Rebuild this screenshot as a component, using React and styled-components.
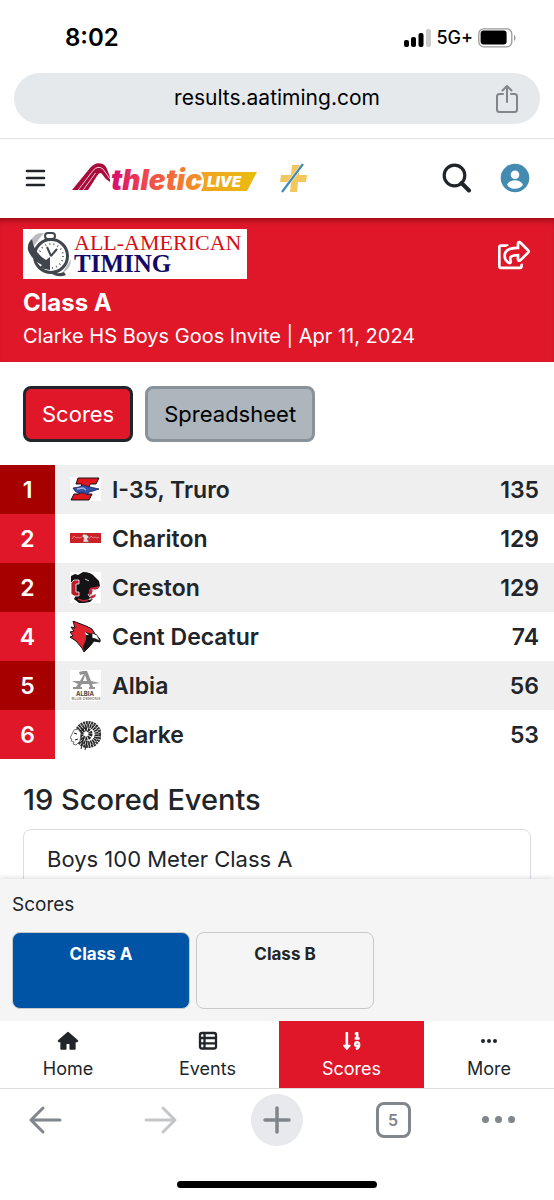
import React from "react";
import styled, { createGlobalStyle } from "styled-components";
import { FaRegShareSquare, FaSortNumericDown } from "react-icons/fa";

const GlobalStyle = createGlobalStyle`
	* {
		box-sizing: border-box;
	}
	body {
		margin: 0;
		background-color: #fff;
		color: #212529;
		font-family: Inter, "Liberation Sans", sans-serif;
	}
	button, input {
		font-family: inherit;
	}
	svg {
		display: block;
	}
`;

const Phone = styled.div`
	display: flex;
	flex-direction: column;
	height: 100vh;
	overflow: hidden;
`;

const StatusBar = styled.div`
	flex: none;
	display: flex;
	justify-content: space-between;
	align-items: center;
	height: 73px;
	padding: 2px 38px 0 65px;
	color: #000;
`;

const Clock = styled.time`
	font-size: 24px;
	font-weight: 600;
`;

const Signal = styled.div`
	display: flex;
	align-items: center;
	gap: 5px;
	font-size: 18px;
	font-weight: 500;
`;

const Omnibox = styled.form`
	flex: none;
	display: grid;
	grid-template-columns: 66px 1fr 66px;
	align-items: center;
	height: 51px;
	margin: 0 14px 14px;
	border-radius: 26px;
	background-color: #e6e9ec;
	> input {
		grid-column: 2;
		width: 100%;
		padding: 0 0 3px;
		border: 0;
		background: none;
		color: #000;
		font-size: 21px;
		text-align: center;
	}
`;

const IconButton = styled.button`
	display: flex;
	justify-content: center;
	align-items: center;
	padding: 0;
	border: 0;
	background: none;
	color: ${(props) => props.$color || "#212529"};
	cursor: pointer;
`;

const Header = styled.header`
	flex: none;
	display: flex;
	align-items: center;
	height: 80px;
	padding: 0 24px 2px;
	border-top: 1px solid #dfe1e5;
	background-color: #fff;
`;

const Brand = styled.a`
	display: flex;
	align-items: center;
	gap: 20px;
	margin: 0 auto 0 24px;
`;

const HeaderActions = styled.div`
	display: flex;
	align-items: center;
	gap: 28px;
`;

const Content = styled.main`
	flex: 1;
	min-height: 0;
	overflow: hidden;
`;

const Hero = styled.section`
	display: flex;
	justify-content: space-between;
	align-items: flex-start;
	height: 144px;
	padding: 11px 24px 0 23px;
	background-color: #e01729;
	box-shadow: inset 0 6px 6px -4px rgba(90, 0, 0, 0.6);
	color: #fff;
	h1 {
		margin: 9px 0 4px;
		font-size: 24px;
		line-height: 30px;
		font-weight: 700;
	}
	p {
		margin: 0;
		font-size: 20px;
		line-height: 28px;
	}
`;

const ShareButton = styled(IconButton)`
	margin-top: 10px;
`;

const Tabs = styled.div`
	display: flex;
	gap: 12px;
	padding: 24px 23px 23px;
`;

const Tab = styled.button`
	height: 56px;
	padding: 0 16px;
	border: 3px solid ${(props) => (props.$active ? "#212529" : "#8a9299")};
	border-radius: 8px;
	background-color: ${(props) => (props.$active ? "#e01729" : "#adb5bd")};
	color: ${(props) => (props.$active ? "#fff" : "#000")};
	font-size: 22px;
	cursor: pointer;
`;

const Standings = styled.table`
	width: 100%;
	border-collapse: collapse;
	font-size: 23px;
	line-height: 28px;
	td, th {
		height: 49px;
		padding: 0;
		font-weight: 600;
		text-align: left;
	}
	tr:nth-child(odd) {
		background-color: #efefef;
	}
`;

const Rank = styled.td`
	&& {
		width: 55px;
		background-color: ${(props) => (props.$dark ? "#a60000" : "#e01729")};
		color: #fff;
		text-align: center;
	}
`;

const Logo = styled.td`
	width: 57px;
	> svg {
		margin-left: 15px;
	}
`;

const Points = styled.td`
	&& {
		padding-right: 15px;
		text-align: right;
	}
`;

const Events = styled.section`
	padding: 24px 23px;
	h2 {
		margin: 0 0 12px;
		font-size: 29px;
		line-height: 34px;
		font-weight: 500;
	}
`;

const EventLink = styled.a`
	display: block;
	padding: 12px 23px;
	border: 1px solid #dcdce6;
	border-radius: 8px;
	color: #212529;
	font-size: 22px;
	line-height: 34px;
	text-decoration: none;
`;

const Drawer = styled.section`
	flex: none;
	height: 142px;
	padding: 12px;
	background-color: #f5f5f5;
	box-shadow: 0 0 6px rgba(0, 0, 0, 0.2);
	z-index: 1;
	h3 {
		margin: 0 0 13px;
		font-size: 19px;
		line-height: 28px;
		font-weight: 400;
	}
`;

const Divisions = styled.div`
	display: grid;
	grid-template-columns: repeat(3, 1fr);
	gap: 6px;
	margin-right: -16px;
`;

const Division = styled.button`
	display: flex;
	justify-content: center;
	height: 77px;
	padding: 11px;
	border: 1px solid #c8c9cb;
	border-radius: 8px;
	background-color: ${(props) => (props.$active ? "#0054a6" : "#f5f5f5")};
	color: ${(props) => (props.$active ? "#fff" : "#212529")};
	font-size: 17px;
	line-height: 20px;
	font-weight: 700;
	cursor: pointer;
`;

const BottomNav = styled.nav`
	flex: none;
	display: grid;
	grid-template-columns: 136fr 143fr 145fr 130fr;
	height: 68px;
	border-bottom: 1px solid #dcdcdc;
	background-color: #fff;
	z-index: 1;
`;

const NavItem = styled.a`
	display: flex;
	flex-direction: column;
	align-items: center;
	gap: 5px;
	padding-top: 9px;
	background-color: ${(props) => (props.$active ? "#e01729" : "#fff")};
	color: ${(props) => (props.$active ? "#fff" : "#212529")};
	font-size: 18px;
	line-height: 24px;
	text-decoration: none;
	> svg {
		height: 22px;
	}
`;

const Toolbar = styled.div`
	flex: none;
	display: grid;
	grid-template-columns: 90fr 142fr 90fr 142fr 68fr;
	justify-items: center;
	align-items: center;
	height: 63px;
	padding: 0 22px 2px 0;
`;

const NewTab = styled(IconButton)`
	width: 52px;
	height: 52px;
	border-radius: 50%;
	background-color: #e8e9ed;
`;

const TabCount = styled(IconButton)`
	width: 35px;
	height: 36px;
	border: 3px solid #80868b;
	border-radius: 8px;
	font-size: 16px;
	font-weight: 600;
`;

const HomeArea = styled.div`
	flex: none;
	display: flex;
	justify-content: center;
	height: 48px;
	padding-top: 29px;
	&:after {
		content: "";
		width: 36%;
		height: 7px;
		border-radius: 4px;
		background-color: #000;
	}
`;

const SignalBars = () => (
	<svg width='28' height='18' viewBox='0 0 28 18'>
		<rect x='1' y='11' width='5' height='7' rx='2' />
		<rect x='8' y='8' width='5' height='10' rx='2' />
		<rect x='15.500' y='4' width='5' height='14' rx='2' />
		<rect x='23' y='0' width='5' height='18' rx='2' fill='#ccc' />
	</svg>
);

const Battery = () => (
	<svg width='38' height='20' viewBox='0 0 38 20'>
		<rect x='.8' y='.8' width='33' height='18' rx='5' fill='none' stroke='#999' strokeWidth='1.3' />
		<rect x='2.6' y='2.6' width='26' height='14' rx='3' />
		<path d='M36 7v6c2-1 2-5 0-6z' fill='#999' />
	</svg>
);

const UploadIcon = () => (
	<svg width='24' height='30' viewBox='0 0 24 30' fill='none' stroke='currentColor' strokeWidth='2' strokeLinecap='round' strokeLinejoin='round'>
		<path d='M8 10H4.500Q2 10 2 12.500v13Q2 28 4.500 28h15q2.500 0 2.500-2.500v-13Q22 10 19.500 10H16' />
		<path d='M12 18V2M7.500 6.500L12 2l4.500 4.500' />
	</svg>
);

const MenuIcon = () => (
	<svg width='24' height='20' viewBox='0 0 24 20' stroke='currentColor' strokeWidth='2.600' strokeLinecap='round'>
		<path d='M3 3h17M3 10h17M3 17h17' />
	</svg>
);

const SearchIcon = () => (
	<svg width='30' height='30' viewBox='0 0 30 30' fill='none' stroke='currentColor'>
		<circle cx='12.500' cy='12.500' r='10.300' strokeWidth='3.200' />
		<path d='M19.500 20l7.500 7.500' strokeWidth='4' strokeLinecap='round' />
	</svg>
);

const UserIcon = () => (
	<svg width='30' height='30' viewBox='0 0 30 30'>
		<circle cx='15' cy='15' r='14.300' fill='#448bb2' />
		<circle cx='15' cy='11.800' r='4.300' fill='#fff' />
		<path d='M7 21.500c2-3.200 5-4.300 8-4.300s6 1.100 8 4.300c-1.500 3-4.800 4.300-8 4.300s-6.500-1.300-8-4.300z' fill='#fff' />
	</svg>
);

const AthleticLogo = () => (
	<svg width='187' height='40' viewBox='0 -4 187 40' role='img' aria-label='AthleticLIVE'>
		<defs>
			<linearGradient id='word' gradientUnits='userSpaceOnUse' x1='38' y1='0' x2='132' y2='0'>
				<stop offset='0' stopColor='#d8086f' />
				<stop offset='.4' stopColor='#ef4a4c' />
				<stop offset='1' stopColor='#f39a24' />
			</linearGradient>
			<linearGradient id='flag' x1='0' y1='0' x2='1' y2='0'>
				<stop offset='0' stopColor='#f0a31f' />
				<stop offset='1' stopColor='#e9bc10' />
			</linearGradient>
		</defs>
		<path d='M0 28L18 6Q23 0 29 1.500q4 .5 6 5.500l3 8v5q-5-3-8-8-2-3-5 2l-9 14z' fill='#a90b3c' />
		<path d='M5.500 29L21 8.500q5-5.500 10-1.500l7 10M10.500 29L23.500 11' fill='none' stroke='#fff' strokeWidth='.8' />
		<text x='39' y='28' fill='url(#word)' fontSize='28' fontWeight='900' fontStyle='italic'>thletic</text>
		<path d='M129 10h56l-10 19h-46q6-10 0-19z' fill='url(#flag)' />
		<text x='135' y='25' fill='#fff' fontSize='15' fontWeight='900' fontStyle='italic'>LIVE</text>
	</svg>
);

const PlusLogo = () => (
	<svg width='30' height='32' viewBox='0 0 30 32'>
		<path d='M13 3h8l-1 10h8l-1 7h-8l-1 10h-7l1-10H1l1-7h10z' fill='#f2c75e' />
		<path d='M3 30L24 2' stroke='#fff' strokeWidth='3' />
		<path d='M3 30L24 2' stroke='#448bb2' strokeWidth='2.200' />
	</svg>
);

const TimingLogo = () => (
	<svg width='224' height='50' viewBox='0 0 224 50' role='img' aria-label='All-American Timing'>
		<path d='M0 0h224v50H0z' fill='#fff' />
		<path d='M8 12q3-9 13-8l-5 6-5 7zM39 44q9-4 9-14l-5 8z' fill='#b9bbc0' />
		<rect x='22' y='4' width='10' height='6' rx='3' fill='#fff' stroke='#41454d' strokeWidth='2' />
		<circle cx='28' cy='27' r='16.500' fill='#fff' stroke='#41454d' strokeWidth='3' />
		<circle cx='28' cy='27' r='12' fill='none' stroke='#6b6e75' strokeWidth='2' strokeDasharray='1 3.190' />
		<path d='M28 27l-4-9M28 27l6-7' stroke='#41454d' strokeWidth='2' />
		<path d='M9 10Q4 14 5 21q3 9 14 15l-3 3 11 2V28l-4 3Q11 24 9 10z' fill='#41454d' />
		<path d='M28 42q5 4 13 1l2 3q-7 3-14-1z' fill='#41454d' />
		<text x='51' y='21' fill='#d40f13' fontFamily='"Liberation Serif", serif' fontSize='22'>ALL-AMERICAN</text>
		<text x='51' y='43' fill='#130a68' fontFamily='"Liberation Serif", serif' fontSize='25' fontWeight='700'>TIMING</text>
	</svg>
);

const TruroLogo = () => (
	<svg width='31' height='31' viewBox='0 0 31 31'>
		<path d='M0 3h31v24H0z' fill='#fff' />
		<path d='M8 4h21l-3 6h-6l-3 10h5l-3 6H1l3-6h5l3-10H6z' fill='#e0161c' stroke='#111' strokeWidth='1' />
		<path d='M3 14l6-1 4-2 7 2 9 2-6 2-4 1-2 3-3-2-6 0-3-2z' fill='#3450a4' stroke='#18204e' strokeWidth='.8' />
		<path d='M7 15l6-1 3 2' fill='none' stroke='#a8b7dc' strokeWidth='1.400' />
	</svg>
);

const CharitonLogo = () => (
	<svg width='31' height='31' viewBox='0 0 31 31'>
		<path d='M0 10h31v10H0z' fill='#cb2026' />
		<path d='M2 16l2-3 2 2 2-1 1 1 3-1M19 16l2-3 2 2 2-1 2 1 2-1' fill='none' stroke='#f0a9a9' strokeWidth='.7' />
		<path d='M14 11l3 1 2 2-2 2 2 3h-6l1-4-2-2z' fill='#e8dcdc' stroke='#777' strokeWidth='.5' />
	</svg>
);

const CrestonLogo = () => (
	<svg width='31' height='31' viewBox='0 0 31 31'>
		<path d='M0 0h31v31H0z' fill='#fff' />
		<path d='M1 4l4-2 3 1 5-3q8 0 12 5l4 4 1 5-3 3-6-1-2 3 2 6-3 3 5-1-3 3-6 1H9l-5-4 2-4-5-9z' fill='#141315' />
		<path d='M20 16l9-2-1 3-5 1-2 6 5-2-1 3-4 2-3-4z' fill='#c3223b' />
		<path d='M9 8H4L1 11v11l3 2h5v-4H6v-8h3z' fill='#b51c2c' stroke='#fff' strokeWidth='.8' />
		<path d='M15 7l4 2M22 17l1 2 1-2M18 22l2 3 1-3' fill='none' stroke='#ccc' strokeWidth='1' />
		<path d='M8 27l5 2 5-1' fill='none' stroke='#c3223b' strokeWidth='1.500' />
	</svg>
);

const CardinalLogo = () => (
	<svg width='31' height='31' viewBox='0 0 31 31'>
		<path d='M3 0l13 5 6 3 3 5 5 5v3l-6-1-4 5-6 6-2-4-6-7-6-4 3-1-3-4 4-1-3-4 4 1z' fill='#e0232f' stroke='#111' strokeWidth='1' />
		<path d='M16 11l6 2 3 1 5 5v2l-6-1-4 5-6 5-1-4 3-8z' fill='#161616' />
		<path d='M22 12l5 2 3 6-4-2-4-1z' fill='#fff' stroke='#111' strokeWidth='.7' />
		<path d='M15 11l4 3h-3z' fill='#fff' />
	</svg>
);

const AlbiaLogo = () => (
	<svg width='31' height='31' viewBox='0 0 31 31'>
		<path d='M0 0h31v31H0z' fill='#fff' />
		<path d='M9 2l4-1h4l4 10 9 2-8 1 1 3h2v2h-6v-2h1l-1-3h-7l-2 3h2v2H3v-2h3l2-3-6-3h8l4-7-4 1zm6 3l-2 6h4z' fill='#929292' />
		<text x='15' y='26' fill='#444' fontSize='6' fontWeight='700' textAnchor='middle'>ALBIA</text>
		<text x='16' y='30' fill='#888' fontSize='4' textAnchor='middle'>BLUE DEMONS</text>
	</svg>
);

const ClarkeLogo = () => (
	<svg width='31' height='31' viewBox='0 0 31 31'>
		<circle cx='18' cy='15.500' r='12' fill='#fff' stroke='#333' strokeWidth='3' strokeDasharray='2 .7' />
		<circle cx='18' cy='15.500' r='8.500' fill='none' stroke='#222' strokeWidth='4' strokeDasharray='1.600 .7' />
		<circle cx='16' cy='15' r='4.500' fill='none' stroke='#222' strokeWidth='4' strokeDasharray='2 .8' />
		<path d='M4 11l4-1 3 4-1 8-4 4-3-1 1-2-3-1 1-2-2-1 2-4z' fill='#fff' stroke='#555' strokeWidth='.8' />
		<path d='M4 14l3 1M5 21l3-1M13 22l-2 8M17 22l-2 9' stroke='#222' strokeWidth='1' />
	</svg>
);

const HomeIcon = () => (
	<svg width='22' height='20' viewBox='0 0 22 20' fill='currentColor' stroke='currentColor' strokeWidth='1.500' strokeLinejoin='round'>
		<path d='M11 1.500L1.500 9.800l.6.8h2V18h4.700v-5q0-.8.8-.8h2.800q.8 0 .8.8v5h4.700v-7.400h2l.6-.8z' />
	</svg>
);

const ListIcon = () => (
	<svg width='20' height='20' viewBox='0 0 20 20' fill='none' stroke='currentColor' strokeWidth='2.300'>
		<rect x='2' y='2' width='16' height='15.500' rx='2' />
		<path d='M2 7h16M2 12.300h16M6.500 2v15' />
	</svg>
);

const Dots = ({ size, gap }) => (
	<svg width={size * 3 + gap * 2} height={size} fill='currentColor'>
		{[0, 1, 2].map((i) => (
			<circle key={i} cx={size / 2 + i * (size + gap)} cy='50%' r={size / 2} />
		))}
	</svg>
);

const Arrow = ({ forward }) => (
	<svg width='34' height='30' viewBox='0 0 34 30' fill='none' stroke='currentColor' strokeWidth='3' strokeLinecap='round' strokeLinejoin='round'>
		<path d={forward ? "M2 15h29M19 3l12 12-12 12" : "M32 15H3M15 3L3 15l12 12"} />
	</svg>
);

const PlusIcon = () => (
	<svg width='28' height='28' viewBox='0 0 28 28' stroke='currentColor' strokeWidth='3.500' strokeLinecap='round'>
		<path d='M14 2v24M2 14h24' />
	</svg>
);

const teams = [
	{ rank: 1, name: "I-35, Truro", points: 135, logo: <TruroLogo /> },
	{ rank: 2, name: "Chariton", points: 129, logo: <CharitonLogo /> },
	{ rank: 2, name: "Creston", points: 129, logo: <CrestonLogo /> },
	{ rank: 4, name: "Cent Decatur", points: 74, logo: <CardinalLogo /> },
	{ rank: 5, name: "Albia", points: 56, logo: <AlbiaLogo /> },
	{ rank: 6, name: "Clarke", points: 53, logo: <ClarkeLogo /> },
];

export default function App() {
	return (
		<Phone>
			<GlobalStyle />
			<StatusBar>
				<Clock>8:02</Clock>
				<Signal>
					<SignalBars />
					<span>5G+</span>
					<Battery />
				</Signal>
			</StatusBar>
			<Omnibox>
				<input type='text' aria-label='Address' defaultValue='results.aatiming.com' />
				<IconButton type='button' aria-label='Share page' $color='#80868b'>
					<UploadIcon />
				</IconButton>
			</Omnibox>
			<Header>
				<IconButton aria-label='Menu'>
					<MenuIcon />
				</IconButton>
				<Brand href='#'>
					<AthleticLogo />
					<PlusLogo />
				</Brand>
				<HeaderActions>
					<IconButton aria-label='Search'>
						<SearchIcon />
					</IconButton>
					<IconButton aria-label='Account'>
						<UserIcon />
					</IconButton>
				</HeaderActions>
			</Header>
			<Content>
				<Hero>
					<div>
						<TimingLogo />
						<h1>Class A</h1>
						<p>Clarke HS Boys Goos Invite | Apr 11, 2024</p>
					</div>
					<ShareButton aria-label='Share meet' $color='#fff'>
						<FaRegShareSquare size={32} />
					</ShareButton>
				</Hero>
				<Tabs>
					<Tab $active>Scores</Tab>
					<Tab>Spreadsheet</Tab>
				</Tabs>
				<Standings>
					<tbody>
						{teams.map((team, i) => (
							<tr key={team.name}>
								<Rank $dark={i % 2 === 0}>{team.rank}</Rank>
								<Logo>{team.logo}</Logo>
								<th scope='row'>{team.name}</th>
								<Points>{team.points}</Points>
							</tr>
						))}
					</tbody>
				</Standings>
				<Events>
					<h2>19 Scored Events</h2>
					<EventLink href='#'>Boys 100 Meter Class A</EventLink>
				</Events>
			</Content>
			<Drawer>
				<h3>Scores</h3>
				<Divisions>
					<Division $active>Class A</Division>
					<Division>Class B</Division>
				</Divisions>
			</Drawer>
			<BottomNav>
				<NavItem href='#'>
					<HomeIcon />
					Home
				</NavItem>
				<NavItem href='#'>
					<ListIcon />
					Events
				</NavItem>
				<NavItem href='#' $active>
					<FaSortNumericDown size={18} />
					Scores
				</NavItem>
				<NavItem href='#'>
					<Dots size={4} gap={2} />
					More
				</NavItem>
			</BottomNav>
			<Toolbar>
				<IconButton aria-label='Back' $color='#80868b'>
					<Arrow />
				</IconButton>
				<IconButton aria-label='Forward' $color='#c4c6c8'>
					<Arrow forward />
				</IconButton>
				<NewTab aria-label='New tab' $color='#80868b'>
					<PlusIcon />
				</NewTab>
				<TabCount aria-label='Open tabs' $color='#80868b'>5</TabCount>
				<IconButton aria-label='More options' $color='#80868b'>
					<Dots size={7} gap={6} />
				</IconButton>
			</Toolbar>
			<HomeArea />
		</Phone>
	);
}
